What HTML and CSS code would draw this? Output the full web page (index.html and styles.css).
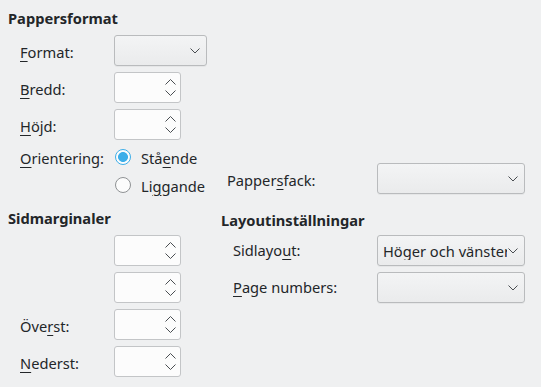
FILE: index.html
```html
<!DOCTYPE html>
<html lang="sv">
<head>
<meta charset="utf-8">
<title>Sidformat</title>
<link rel="stylesheet" href="styles.css">
</head>
<body>
<div class="page">
  <section class="top">
    <div class="paper">
      <div class="hdr">Pappersformat</div>
      <div class="form">
        <span class="lbl"><u>F</u>ormat:</span>
        <div class="combo fmt"><span class="val"></span><svg class="chev" width="10" height="6" viewBox="0 0 10 6"><polyline points="0.5,0.5 5,5 9.5,0.5"/></svg></div>

        <span class="lbl"><u>B</u>redd:</span>
        <div class="spin"><span class="arrows"><svg width="11" height="6" viewBox="0 0 11 6"><polyline points="0.5,5.5 5.5,0.5 10.5,5.5"/></svg><svg width="11" height="6" viewBox="0 0 11 6"><polyline points="0.5,0.5 5.5,5.5 10.5,0.5"/></svg></span></div>

        <span class="lbl"><u>H</u>öjd:</span>
        <div class="spin"><span class="arrows"><svg width="11" height="6" viewBox="0 0 11 6"><polyline points="0.5,5.5 5.5,0.5 10.5,5.5"/></svg><svg width="11" height="6" viewBox="0 0 11 6"><polyline points="0.5,0.5 5.5,5.5 10.5,0.5"/></svg></span></div>

        <span class="lbl rowlbl"><u>O</u>rientering:</span>
        <div class="radio"><span class="dot on"></span><span>Stå<u>e</u>nde</span></div>

        <span></span>
        <div class="radio"><span class="dot"></span><span>Li<u>g</u>gande</span></div>
      </div>
    </div>
    <div class="tray">
      <span class="lbl">Papper<u>s</u>fack:</span>
      <div class="combo wide"><span class="val"></span><svg class="chev" width="10" height="6" viewBox="0 0 10 6"><polyline points="0.5,0.5 5,5 9.5,0.5"/></svg></div>
    </div>
  </section>

  <section class="bottom">
    <div class="margins">
      <div class="hdr">Sidmarginaler</div>
      <div class="form">
        <span class="lbl"></span>
        <div class="spin"><span class="arrows"><svg width="11" height="6" viewBox="0 0 11 6"><polyline points="0.5,5.5 5.5,0.5 10.5,5.5"/></svg><svg width="11" height="6" viewBox="0 0 11 6"><polyline points="0.5,0.5 5.5,5.5 10.5,0.5"/></svg></span></div>

        <span class="lbl"></span>
        <div class="spin"><span class="arrows"><svg width="11" height="6" viewBox="0 0 11 6"><polyline points="0.5,5.5 5.5,0.5 10.5,5.5"/></svg><svg width="11" height="6" viewBox="0 0 11 6"><polyline points="0.5,0.5 5.5,5.5 10.5,0.5"/></svg></span></div>

        <span class="lbl">Öve<u>r</u>st:</span>
        <div class="spin"><span class="arrows"><svg width="11" height="6" viewBox="0 0 11 6"><polyline points="0.5,5.5 5.5,0.5 10.5,5.5"/></svg><svg width="11" height="6" viewBox="0 0 11 6"><polyline points="0.5,0.5 5.5,5.5 10.5,0.5"/></svg></span></div>

        <span class="lbl"><u>N</u>ederst:</span>
        <div class="spin"><span class="arrows"><svg width="11" height="6" viewBox="0 0 11 6"><polyline points="0.5,5.5 5.5,0.5 10.5,5.5"/></svg><svg width="11" height="6" viewBox="0 0 11 6"><polyline points="0.5,0.5 5.5,5.5 10.5,0.5"/></svg></span></div>
      </div>
    </div>
    <div class="layout">
      <div class="hdr">Layoutinställningar</div>
      <div class="form2">
        <span class="lbl">Sidlayo<u>u</u>t:</span>
        <div class="combo wide"><span class="val">Höger och vänster</span><svg class="chev" width="10" height="6" viewBox="0 0 10 6"><polyline points="0.5,0.5 5,5 9.5,0.5"/></svg></div>

        <span class="lbl"><u>P</u>age numbers:</span>
        <div class="combo wide"><span class="val"></span><svg class="chev" width="10" height="6" viewBox="0 0 10 6"><polyline points="0.5,0.5 5,5 9.5,0.5"/></svg></div>
      </div>
    </div>
  </section>
</div>
</body>
</html>
```

FILE: styles.css
```css
html, body {
  margin: 0;
  padding: 0;
  background: #eff0f1;
}
body {
  font-family: "Noto Sans", "DejaVu Sans", sans-serif;
  font-size: 14.67px;
  color: #232629;
  width: 541px;
  height: 387px;
  overflow: hidden;
}
.page {
  padding: 9px 0 0 8px;
}
u {
  text-decoration: underline;
  text-decoration-thickness: 1px;
  text-underline-offset: 3px;
}
.hdr {
  font-weight: bold;
  line-height: 18px;
  height: 18px;
}
.top {
  display: flex;
}
.paper {
  width: 199px;
}
.form {
  margin: 8px 0 0 12px;
  display: grid;
  grid-template-columns: 94px auto;
  row-gap: 6px;
  align-items: center;
}
.lbl {
  line-height: 18px;
  padding-top: 2px;
  white-space: nowrap;
}
.combo {
  box-sizing: border-box;
  height: 31px;
  border: 1px solid #b9bbbd;
  border-radius: 3px;
  background: linear-gradient(#f3f4f5, #eaebec);
  box-shadow: 0 1px 0 rgba(0,0,0,0.04);
  display: flex;
  align-items: center;
  padding: 0 6px 0 5px;
}
.combo.fmt {
  width: 93px;
}
.combo.wide {
  width: 148px;
}
.val {
  flex: 1;
  overflow: hidden;
  white-space: nowrap;
  line-height: 18px;
  color: #232629;
}
.chev {
  flex: none;
  margin-left: 1px;
}
svg polyline {
  fill: none;
  stroke: #4a4e52;
  stroke-width: 1;
}
.spin {
  box-sizing: border-box;
  width: 67px;
  height: 31px;
  border: 1px solid #c3c5c7;
  border-radius: 3px;
  background: #fcfcfc;
  display: flex;
  align-items: center;
  justify-content: flex-end;
  padding-right: 4px;
}
.arrows {
  display: flex;
  flex-direction: column;
  gap: 5px;
}
.arrows svg {
  display: block;
}
.radio {
  height: 22px;
  display: flex;
  align-items: center;
  gap: 10px;
  padding-left: 1px;
  line-height: 18px;
}
.radio span:last-child {
  padding-top: 1px;
}
.dot {
  box-sizing: border-box;
  width: 16px;
  height: 16px;
  border-radius: 50%;
  border: 1px solid #8f9294;
  background: #fcfcfc;
  flex: none;
}
.dot.on {
  border-color: #3daee9;
  background: radial-gradient(circle, #3daee9 0 4.6px, #fcfcfc 5.3px);
}
.tray {
  margin-left: 20px;
  align-self: flex-end;
  margin-bottom: 2px;
  display: grid;
  grid-template-columns: 150px 148px;
  align-items: center;
}
.bottom {
  display: flex;
  margin-top: 13px;
}
.margins {
  width: 199px;
}
.margins .form {
  margin-top: 8px;
}
.layout {
  margin-left: 14px;
  padding-top: 2px;
}
.form2 {
  margin: 6px 0 0 12px;
  display: grid;
  grid-template-columns: 144px 148px;
  row-gap: 6px;
  align-items: center;
}
.form2 .lbl {
  padding-top: 0;
  padding-bottom: 1px;
}
```
